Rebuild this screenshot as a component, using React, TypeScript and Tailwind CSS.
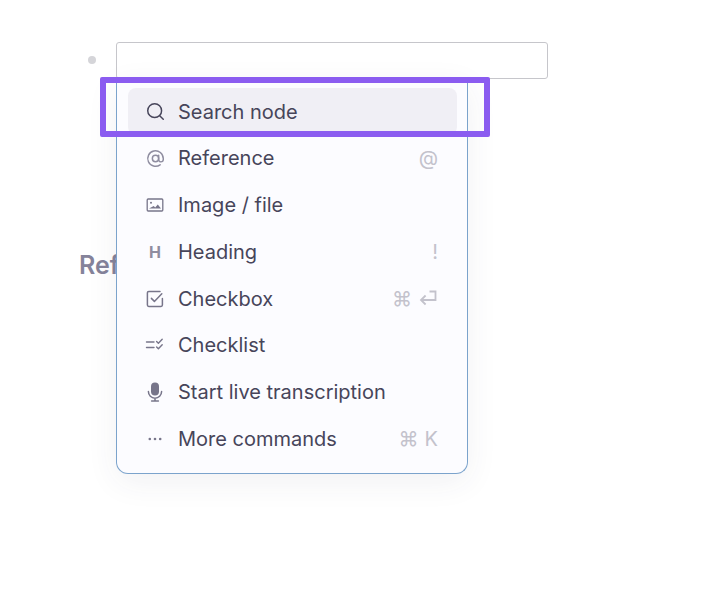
import React from "react";

const iconClass = "w-[20px] h-[20px] text-[#77758a]";

function SearchIcon() {
  return (
    <svg viewBox="0 0 20 20" fill="none" stroke="#47455a" strokeWidth="1.4" strokeLinecap="round" className="w-[21px] h-[21px] shrink-0">
      <circle cx="9.2" cy="9.2" r="6.6" />
      <path d="M14 14 L17.4 17.4" />
    </svg>
  );
}

function AtIcon() {
  return (
    <svg viewBox="0 0 20 20" fill="none" stroke="currentColor" strokeWidth="1.4" strokeLinecap="round" className="w-[21px] h-[21px] shrink-0 text-[#8f8da0]">
      <circle cx="10" cy="10" r="3" />
      <path d="M13 7v4a2.2 2.2 0 0 0 4.4 0v-1a7.4 7.4 0 1 0-3 6" />
    </svg>
  );
}

function ImageIcon() {
  return (
    <svg viewBox="0 0 20 20" fill="none" stroke="currentColor" strokeWidth="1.3" className={iconClass}>
      <rect x="2.2" y="4" width="15.6" height="12" rx="1" />
      <circle cx="6" cy="7.8" r="1" fill="currentColor" stroke="none" />
      <path d="M4 13.6h12l-3.2-4.2-2.6 3-1.5-1.4z" fill="currentColor" stroke="none" />
    </svg>
  );
}

function CheckboxIcon() {
  return (
    <svg viewBox="0 0 20 20" fill="none" stroke="currentColor" strokeWidth="1.5" strokeLinecap="round" strokeLinejoin="round" className={iconClass}>
      <path d="M17.4 9.5V16a1.4 1.4 0 0 1-1.4 1.4H3.8A1.4 1.4 0 0 1 2.4 16V3.8A1.4 1.4 0 0 1 3.8 2.4H15" />
      <path d="M6.4 9.4l3 3 7.4-7.6" />
    </svg>
  );
}

function ChecklistIcon() {
  return (
    <svg viewBox="0 0 20 20" fill="none" stroke="currentColor" strokeWidth="1.4" strokeLinecap="round" strokeLinejoin="round" className={iconClass}>
      <path d="M1.5 7h7.5M1.5 12.5h7.5" />
      <path d="M11.6 6.4l1.8 1.8 3.8-4M11.6 12l1.8 1.8 3.8-4" />
    </svg>
  );
}

function MicIcon() {
  return (
    <svg viewBox="0 0 20 20" fill="none" stroke="currentColor" strokeWidth="1.5" strokeLinecap="round" className={iconClass}>
      <rect x="6" y="0.6" width="8" height="13" rx="4" fill="currentColor" stroke="none" />
      <path d="M3.4 9.6a6.6 6.6 0 0 0 13.2 0M10 16.2v2.4M6.6 19h6.8" />
    </svg>
  );
}

function DotsIcon() {
  return (
    <svg viewBox="0 0 20 20" fill="currentColor" className={iconClass}>
      <circle cx="4.8" cy="10" r="1.3" />
      <circle cx="10" cy="10" r="1.3" />
      <circle cx="15.2" cy="10" r="1.3" />
    </svg>
  );
}

function ReturnIcon() {
  return (
    <svg viewBox="0 0 20 20" fill="none" stroke="currentColor" strokeWidth="1.8" className="w-[20px] h-[20px]">
      <path d="M11.5 2.5H17.5V11H3" />
      <path d="M7.6 6.5 L3 11 L7.6 15.5" />
    </svg>
  );
}

const ITEMS = [
  { label: "Search node", icon: <SearchIcon />, active: true },
  { label: "Reference", icon: <AtIcon />, hint: <span>@</span> },
  { label: "Image / file", icon: <ImageIcon /> },
  { label: "Heading", icon: <span className="text-[16px] font-bold text-[#8f8da0]">H</span>, hint: <span>!</span> },
  {
    label: "Checkbox",
    icon: <CheckboxIcon />,
    hint: (
      <>
        <span>⌘</span>
        <ReturnIcon />
      </>
    ),
  },
  { label: "Checklist", icon: <ChecklistIcon /> },
  { label: "Start live transcription", icon: <MicIcon /> },
  {
    label: "More commands",
    icon: <DotsIcon />,
    hint: (
      <>
        <span>⌘</span>
        <span>K</span>
      </>
    ),
  },
];

export default function App() {
  return (
    <div className="relative w-[718px] h-[602px] bg-white overflow-hidden font-['Inter',sans-serif]">
      <div className="pl-[79px] pt-[42px]">
        <div className="flex items-center">
          <div className="w-[37px] flex pl-[9px] mb-[2px]">
            <span className="w-[8px] h-[8px] rounded-full bg-[#d5d5d9]" />
          </div>
          <div className="w-[432px] h-[37px] rounded-[3px] border border-[#c6c6cb] bg-white" />
        </div>
        <h2 className="mt-[170px] text-[25px] leading-[32px] font-semibold text-[#85839a]">References</h2>
      </div>

      {/* slash menu */}
      <div className="absolute left-[116px] top-[79px] w-[352px] h-[395px] rounded-b-[12px] border border-t-0 border-[#7ba3cc] bg-[#fcfcff] pl-[11px] pr-[10px] pt-[9.2px] shadow-[0_8px_32px_rgba(60,60,90,0.07)]">
        {ITEMS.map((item) => (
          <div
            key={item.label}
            className={`flex items-center h-[46.75px] pl-[17px] pr-[19px] rounded-[8px] text-[20px] text-[#47455a] ${
              item.active ? "bg-[#f0eff5]" : ""
            }`}
          >
            <div className="w-[20px] flex justify-center shrink-0">{item.icon}</div>
            <span className="ml-[13px] flex-1">{item.label}</span>
            {item.hint && (
              <div className="flex items-center gap-[6px] text-[#c3c2cc]">{item.hint}</div>
            )}
          </div>
        ))}
      </div>

      {/* annotation box */}
      <div className="absolute left-[100px] top-[77px] w-[390px] h-[60px] rounded-[2px] border-[6px] border-[#8b5cf0]" />
    </div>
  );
}
